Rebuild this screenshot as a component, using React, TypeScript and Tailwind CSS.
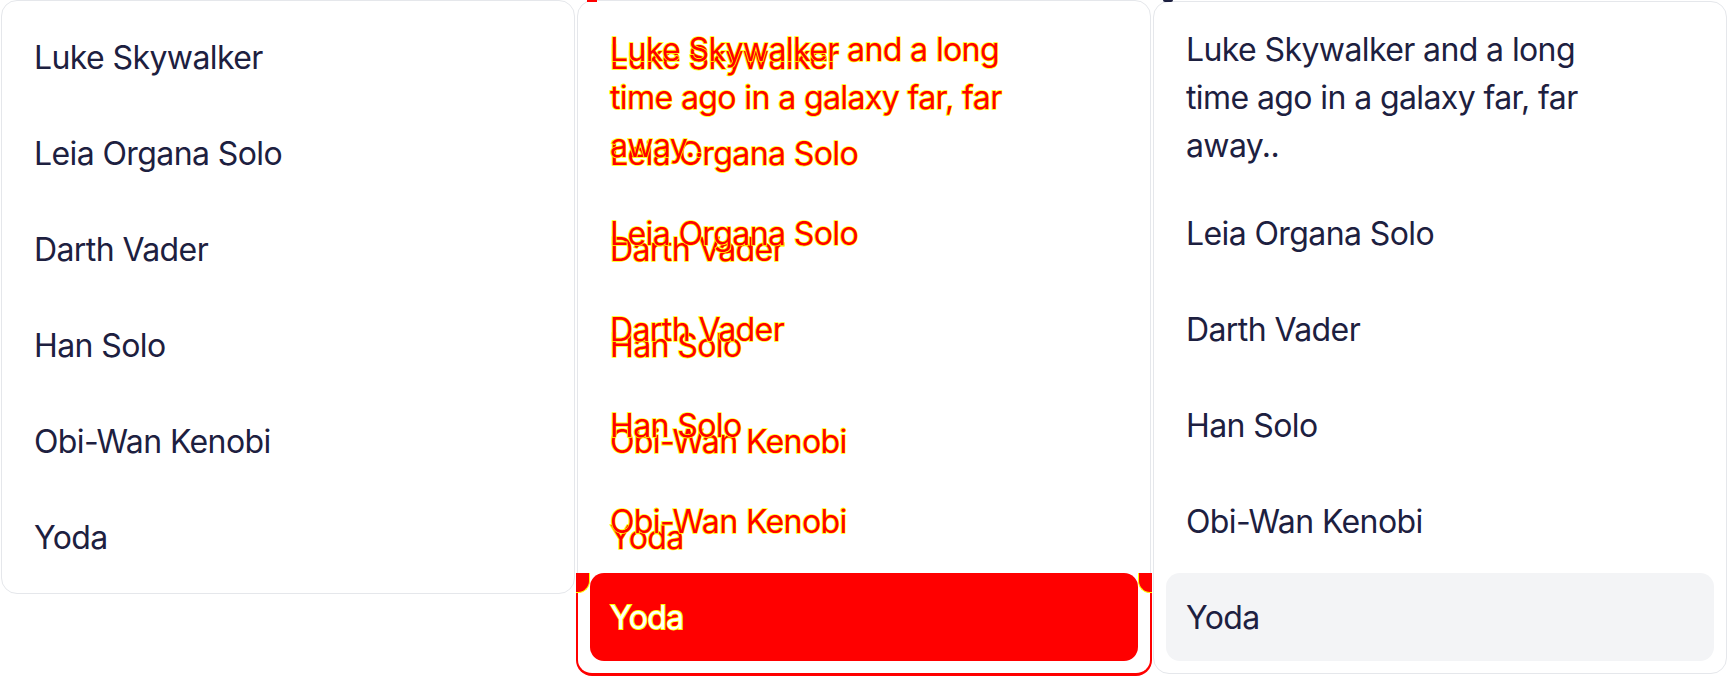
import React from "react";

const NAMES = ["Luke Skywalker", "Leia Organa Solo", "Darth Vader", "Han Solo", "Obi-Wan Kenobi", "Yoda"];
const LONG = "Luke Skywalker and a long time ago in a galaxy far, far away..";
const DIFF_TEXT = "text-[#ff0000] [-webkit-text-stroke:1.6px_#ffff00] [paint-order:stroke_fill]";
const DIFF_WHITE = "text-white [-webkit-text-stroke:1.8px_#ffff00] [paint-order:stroke_fill]";

function LeftPanel({ diff }: { diff?: boolean }) {
  return (
    <div className="flex flex-col gap-2 rounded-2xl border border-[#e5e7eb] bg-white p-3">
      {NAMES.map((n) => (
        <div key={n} className="pl-5 pr-5 pt-[21px] pb-[19px]">
          <span className={diff ? DIFF_TEXT : ""}>{n}</span>
        </div>
      ))}
    </div>
  );
}

function RightPanel({ diff }: { diff?: boolean }) {
  return (
    <div
      className={
        "flex flex-col gap-2 rounded-2xl border p-3 " +
        (diff ? "border-transparent bg-transparent" : "border-[#e5e7eb] bg-white")
      }
    >
      <div className="pl-5 pr-5 pt-[12px] pb-[11px]">
        <span className={"block max-w-[420px] " + (diff ? DIFF_TEXT : "")}>{LONG}</span>
      </div>
      {NAMES.slice(1).map((n) => {
        const hover = n === "Yoda";
        let cls = "rounded-[14px] pl-5 pr-5 pt-[21px] pb-[19px]";
        if (hover) cls += diff ? " bg-[#ff0000]" : " bg-[#f3f4f6]";
        const textCls = diff ? (hover ? DIFF_WHITE : DIFF_TEXT) : "";
        return (
          <div key={n} className={cls}>
            <span className={textCls}>{n}</span>
          </div>
        );
      })}
    </div>
  );
}

export default function App() {
  return (
    <div className="flex h-[676px] w-[1728px] overflow-hidden bg-white font-['Inter','Noto_Sans',sans-serif] text-[32px] leading-[48px] tracking-[-0.6px] text-[#1d2040]">
      {/* expected */}
      <div className="w-[576px] shrink-0 px-px">
        <LeftPanel />
      </div>

      {/* diff */}
      <div className="relative w-[576px] shrink-0 px-px">
        <LeftPanel diff />
        {/* red outline of the taller panel below the old one */}
        <div className="absolute left-0 top-[573px] h-[103px] w-[576px] rounded-b-2xl border-x-2 border-b-[3px] border-[#ff0000] bg-white" />
        <div className="absolute left-0 top-[573px] h-[20px] w-[14px] rounded-br-[12px] border-b border-r border-[#ffff00] bg-[#ff0000]" />
        <div className="absolute right-0 top-[573px] h-[20px] w-[14px] rounded-bl-[12px] border-b border-l border-[#ffff00] bg-[#ff0000]" />
        <div className="absolute left-[11px] top-0 h-[2px] w-[10px] bg-[#ff0000]" />
        <div className="absolute inset-x-px top-px">
          <RightPanel diff />
        </div>
      </div>

      {/* actual */}
      <div className="relative w-[576px] shrink-0 px-px pt-px">
        <div className="absolute left-[11px] top-0 h-[1.5px] w-[10px] rounded-b-full bg-[#1d2040]" />
        <RightPanel />
      </div>
    </div>
  );
}
